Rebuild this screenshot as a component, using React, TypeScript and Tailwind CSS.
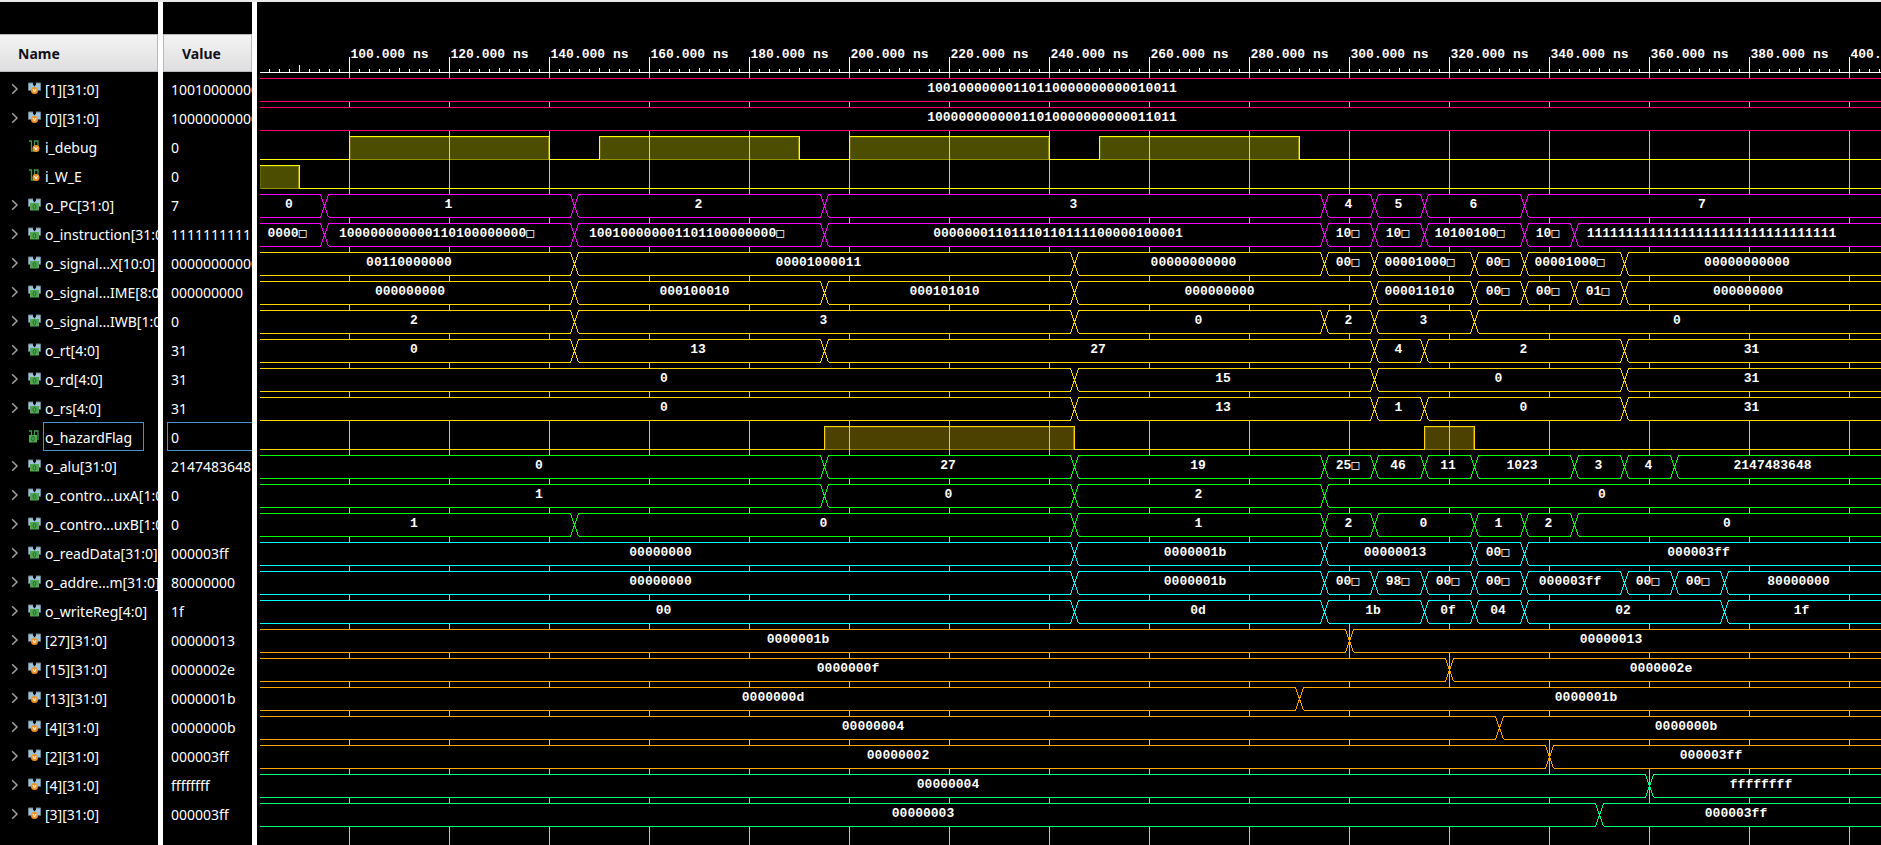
import { useLayoutEffect, useRef, useState } from "react";

type IconKind = "bus-var" | "bus-out" | "bit-var" | "bit-out";
type Segment = [start: number, text: string];

interface Signal {
  name: string;
  value: string;
  icon: IconKind;
  color: string;
  bus?: Segment[];
  pulses?: [from: number, to: number][];
  selected?: boolean;
}

const PINK = "#ff0072";
const YELLOW = "#ffff00";
const MAGENTA = "#ff00ff";
const GOLD = "#ffd700";
const GREEN = "#00ff00";
const CYAN = "#00ffff";
const ORANGE = "#ffa500";
const SPRING = "#00ff7f";

const BEGIN = 80;

/* A "□" at the end of a label marks a value that does not fit its segment. */
const SIGNALS: Signal[] = [
  { name: "[1][31:0]", value: "10010000000110110000000000010011", icon: "bus-var", color: PINK, bus: [[BEGIN, "10010000000110110000000000010011"]] },
  { name: "[0][31:0]", value: "10000000000011010000000000011011", icon: "bus-var", color: PINK, bus: [[BEGIN, "10000000000011010000000000011011"]] },
  { name: "i_debug", value: "0", icon: "bit-var", color: YELLOW, pulses: [[100, 140], [150, 190], [200, 240], [250, 290]] },
  { name: "i_W_E", value: "0", icon: "bit-var", color: YELLOW, pulses: [[BEGIN, 90]] },
  { name: "o_PC[31:0]", value: "7", icon: "bus-out", color: MAGENTA, bus: [[BEGIN, "0"], [95, "1"], [145, "2"], [195, "3"], [295, "4"], [305, "5"], [315, "6"], [335, "7"]] },
  { name: "o_instruction[31:0]", value: "11111111111111111111111111111111", icon: "bus-out", color: MAGENTA, bus: [[BEGIN, "0000□"], [95, "100000000000110100000000□"], [145, "100100000001101100000000□"], [195, "00000001101110110111100000100001"], [295, "10□"], [305, "10□"], [315, "10100100□"], [335, "10□"], [345, "11111111111111111111111111111111"]] },
  { name: "o_signal...X[10:0]", value: "00000000000", icon: "bus-out", color: GOLD, bus: [[BEGIN, "00110000000"], [145, "00001000011"], [245, "00000000000"], [295, "00□"], [305, "00001000□"], [325, "00□"], [335, "00001000□"], [355, "00000000000"]] },
  { name: "o_signal...IME[8:0]", value: "000000000", icon: "bus-out", color: GOLD, bus: [[BEGIN, "000000000"], [145, "000100010"], [195, "000101010"], [245, "000000000"], [305, "000011010"], [325, "00□"], [335, "00□"], [345, "01□"], [355, "000000000"]] },
  { name: "o_signal...IWB[1:0]", value: "0", icon: "bus-out", color: GOLD, bus: [[BEGIN, "2"], [145, "3"], [245, "0"], [295, "2"], [305, "3"], [325, "0"]] },
  { name: "o_rt[4:0]", value: "31", icon: "bus-out", color: GOLD, bus: [[BEGIN, "0"], [145, "13"], [195, "27"], [305, "4"], [315, "2"], [355, "31"]] },
  { name: "o_rd[4:0]", value: "31", icon: "bus-out", color: GOLD, bus: [[BEGIN, "0"], [245, "15"], [305, "0"], [355, "31"]] },
  { name: "o_rs[4:0]", value: "31", icon: "bus-out", color: GOLD, bus: [[BEGIN, "0"], [245, "13"], [305, "1"], [315, "0"], [355, "31"]] },
  { name: "o_hazardFlag", value: "0", icon: "bit-out", color: GOLD, pulses: [[195, 245], [315, 325]], selected: true },
  { name: "o_alu[31:0]", value: "2147483648", icon: "bus-out", color: GREEN, bus: [[BEGIN, "0"], [195, "27"], [245, "19"], [295, "25□"], [305, "46"], [315, "11"], [325, "1023"], [345, "3"], [355, "4"], [365, "2147483648"]] },
  { name: "o_contro...uxA[1:0]", value: "0", icon: "bus-out", color: GREEN, bus: [[BEGIN, "1"], [195, "0"], [245, "2"], [295, "0"]] },
  { name: "o_contro...uxB[1:0]", value: "0", icon: "bus-out", color: GREEN, bus: [[BEGIN, "1"], [145, "0"], [245, "1"], [295, "2"], [305, "0"], [325, "1"], [335, "2"], [345, "0"]] },
  { name: "o_readData[31:0]", value: "000003ff", icon: "bus-out", color: CYAN, bus: [[BEGIN, "00000000"], [245, "0000001b"], [295, "00000013"], [325, "00□"], [335, "000003ff"]] },
  { name: "o_addre...m[31:0]", value: "80000000", icon: "bus-out", color: CYAN, bus: [[BEGIN, "00000000"], [245, "0000001b"], [295, "00□"], [305, "98□"], [315, "00□"], [325, "00□"], [335, "000003ff"], [355, "00□"], [365, "00□"], [375, "80000000"]] },
  { name: "o_writeReg[4:0]", value: "1f", icon: "bus-out", color: CYAN, bus: [[BEGIN, "00"], [245, "0d"], [295, "1b"], [315, "0f"], [325, "04"], [335, "02"], [375, "1f"]] },
  { name: "[27][31:0]", value: "00000013", icon: "bus-var", color: ORANGE, bus: [[BEGIN, "0000001b"], [300, "00000013"]] },
  { name: "[15][31:0]", value: "0000002e", icon: "bus-var", color: ORANGE, bus: [[BEGIN, "0000000f"], [320, "0000002e"]] },
  { name: "[13][31:0]", value: "0000001b", icon: "bus-var", color: ORANGE, bus: [[BEGIN, "0000000d"], [290, "0000001b"]] },
  { name: "[4][31:0]", value: "0000000b", icon: "bus-var", color: ORANGE, bus: [[BEGIN, "00000004"], [330, "0000000b"]] },
  { name: "[2][31:0]", value: "000003ff", icon: "bus-var", color: ORANGE, bus: [[BEGIN, "00000002"], [340, "000003ff"]] },
  { name: "[4][31:0]", value: "ffffffff", icon: "bus-var", color: SPRING, bus: [[BEGIN, "00000004"], [360, "ffffffff"]] },
  { name: "[3][31:0]", value: "000003ff", icon: "bus-var", color: SPRING, bus: [[BEGIN, "00000003"], [350, "000003ff"]] },
];

/* Geometry of the wave canvas, in canvas pixels. */
const PX_PER_NS = 5;
const EDGE = 2;
const AXIS_Y = 70;
const FIRST_ROW = 76;
const PITCH = 29;
const WAVE_H = 23;
const SLOPE = 4;

const timeToX = (t: number) => (t <= BEGIN ? EDGE : 92 + (t - 100) * PX_PER_NS);

function SignalIcon({ kind }: { kind: IconKind }) {
  const bus = kind.startsWith("bus");
  const out = kind.endsWith("out");
  return (
    <svg width="14" height="13" viewBox="0 0 14 13" className="block shrink-0" aria-hidden="true">
      {bus ? (
        <>
          <path d="M.5 1H5v1.500l1.500 2L8 2.500V1h4.500v7.500H.5z" fill="#9cc3d8" />
          <path d="M.5 8.500V1H5M12.500 8.500V1H8" fill="none" stroke="#6d8490" strokeWidth="1" />
        </>
      ) : (
        <path d="M1 1h2.500v10h3M6.500 10V1H10v9" fill="none" stroke="#3f9a4a" strokeWidth="1.300" />
      )}
      {out ? (
        <>
          <rect x={bus ? 2 : 1} y="5" width={bus ? 9 : 8} height="7.500" fill="#4fa650" />
          <ellipse cx={bus ? 6.5 : 5} cy="8.700" rx="1.400" ry="2.300" fill="none" stroke="#1f6a2a" strokeWidth="1" />
        </>
      ) : (
        <>
          <circle cx={bus ? 6.5 : 8} cy="8.500" r="3.500" fill="#f0932b" />
          <path d={bus ? "M5 7l1.500 3L8 7" : "M6.500 7L8 10l1.500-3"} fill="none" stroke="#fff" strokeWidth="1" />
        </>
      )}
    </svg>
  );
}

function Chevron() {
  return (
    <svg width="8" height="12" viewBox="0 0 8 12" className="block" aria-hidden="true">
      <path d="M1.200 1.200L6 6l-4.800 4.800" fill="none" stroke="#a0a0a0" strokeWidth="1.500" />
    </svg>
  );
}

function BusWave({ signal, top, width }: { signal: Signal; top: number; width: number }) {
  const bottom = top + WAVE_H;
  const mid = top + WAVE_H / 2;
  const segs = (signal.bus ?? []).map(([start, text], i, all) => {
    const first = i === 0;
    const last = i === all.length - 1;
    const x0 = timeToX(start);
    const x1 = last ? width : timeToX(all[i + 1][0]);
    return {
      text,
      last,
      x0,
      x1,
      l: first ? x0 : x0 + SLOPE,
      r: last ? x1 : x1 - SLOPE,
      center: ((first ? -2 : x0) + x1 - 1 - text.length) / 2,
    };
  });
  return (
    <g>
      {segs.map((s) => (
        <polygon
          key={s.x0}
          points={`${s.x0},${mid} ${s.l},${top} ${s.r},${top} ${s.x1},${mid} ${s.r},${bottom} ${s.l},${bottom}`}
          fill="#000"
        />
      ))}
      {segs.map((s) => (
        <path
          key={s.x0}
          d={
            `M${s.l} ${top}H${s.r}M${s.l} ${bottom}H${s.r}` +
            (s.last ? "" : `M${s.r} ${top}L${s.x1 + SLOPE} ${bottom}M${s.r} ${bottom}L${s.x1 + SLOPE} ${top}`)
          }
          stroke={signal.color}
          fill="none"
        />
      ))}
      {segs.map((s) => (
        <text key={s.x0} x={s.center} y={top + 13} textAnchor="middle" fill="#fff">
          {s.text.replace("□", "")}
          {s.text.endsWith("□") && <tspan className="font-['DejaVu_Sans_Mono',monospace] font-normal">□</tspan>}
        </text>
      ))}
    </g>
  );
}

function BitWave({ signal, top, width }: { signal: Signal; top: number; width: number }) {
  const pulses = signal.pulses ?? [];
  const bottom = top + WAVE_H;
  let d = "";
  let x = EDGE;
  pulses.forEach(([from, to]) => {
    const a = timeToX(from);
    const b = timeToX(to);
    d += from <= BEGIN ? `M${a} ${top}H${b}V${bottom}` : `M${x} ${bottom}H${a}V${top}H${b}V${bottom}`;
    x = b;
  });
  d += `M${x} ${bottom}H${width}`;
  return (
    <g>
      {pulses.map(([from, to]) => (
        <rect
          key={from}
          x={timeToX(from) + 1}
          y={top + 1}
          width={timeToX(to) - timeToX(from) - 2}
          height={WAVE_H - 1}
          fill={signal.color}
          fillOpacity={0.3}
          stroke={signal.color}
          strokeOpacity={0.4}
        />
      ))}
      <path d={d} fill="none" stroke={signal.color} />
    </g>
  );
}

function WaveCanvas() {
  const ref = useRef<HTMLDivElement>(null);
  const [size, setSize] = useState({ w: 1624, h: 843 });

  useLayoutEffect(() => {
    const el = ref.current;
    if (!el) return;
    const update = () => setSize({ w: el.clientWidth, h: el.clientHeight });
    update();
    const observer = new ResizeObserver(update);
    observer.observe(el);
    return () => observer.disconnect();
  }, []);

  const ticks: number[] = [];
  for (let t = 84; timeToX(t) < size.w; t += 2) ticks.push(t);
  const majors = ticks.filter((t) => t % 20 === 0);

  return (
    <div ref={ref} className="min-w-0 flex-1 overflow-hidden bg-black">
      <svg
        width={size.w}
        height={size.h}
        viewBox={`-0.5 -0.5 ${size.w} ${size.h}`}
        shapeRendering="crispEdges"
        className="block font-['Liberation_Mono',monospace] text-[13px] font-bold"
        role="img"
        aria-label="Waveform"
      >
        {majors.map((t) => (
          <line key={t} x1={timeToX(t)} x2={timeToX(t)} y1={AXIS_Y} y2={size.h} stroke="#c0c0c0" />
        ))}
        <line x1={EDGE} x2={size.w} y1={AXIS_Y} y2={AXIS_Y} stroke="#fff" />
        {ticks.map((t) => {
          const rise = t % 20 === 0 ? 16 : t === 90 ? 8 : t % 10 === 0 ? 5 : 4;
          return <line key={t} x1={timeToX(t)} x2={timeToX(t)} y1={AXIS_Y - rise} y2={AXIS_Y} stroke="#fff" />;
        })}
        {majors.map((t) => (
          <text key={t} x={timeToX(t) + 1} y={55} fill="#fff">
            {`${t}.000 ns`}
          </text>
        ))}
        {SIGNALS.map((s, i) => {
          const top = FIRST_ROW + i * PITCH;
          return s.bus ? (
            <BusWave key={i} signal={s} top={top} width={size.w} />
          ) : (
            <BitWave key={i} signal={s} top={top} width={size.w} />
          );
        })}
      </svg>
    </div>
  );
}

const HEAD =
  "flex h-[38px] items-center border border-[#b9b9bb] bg-linear-to-b from-[#f4f4f4] to-[#dedee0] pt-0.5 text-sm font-bold text-[#101018]";

export default function App() {
  return (
    <div className="flex h-screen flex-col overflow-hidden border-t-2 border-[#e8e8e8] bg-black font-['Noto_Sans','Open_Sans',sans-serif] text-sm text-white">
      <main className="flex min-h-0 flex-1">
        <section className="w-[158px] shrink-0 overflow-hidden pt-8" aria-label="Signal names">
          <h2 className={`${HEAD} border-l-0 pl-[18px]`}>Name</h2>
          <ul className="pt-0.5">
            {SIGNALS.map((s, i) => (
              <li key={i} className="flex h-[29px] items-center whitespace-nowrap">
                <span className="flex w-7 shrink-0 justify-start pl-[11px]">
                  {s.bus && (
                    <button type="button" aria-label={`Expand ${s.name}`}>
                      <Chevron />
                    </button>
                  )}
                </span>
                <SignalIcon kind={s.icon} />
                <span
                  className={
                    s.selected
                      ? "ml-px flex h-[29px] w-[101px] items-center border border-[#4a90d0] pt-0.5 pl-px"
                      : "ml-px flex h-[29px] items-center pt-0.5 pl-0.5"
                  }
                >
                  {s.name}
                </span>
              </li>
            ))}
          </ul>
        </section>
        <div className="w-[5px] shrink-0 bg-white" />
        <section className="w-[89px] shrink-0 overflow-hidden pt-8" aria-label="Signal values">
          <h2 className={`${HEAD} pl-[18px]`}>Value</h2>
          <ul className="pt-0.5">
            {SIGNALS.map((s, i) => (
              <li
                key={i}
                className={
                  s.selected
                    ? "ml-1 flex h-[29px] items-center border border-r-0 border-[#4a90d0] pt-0.5 pl-[3px]"
                    : "ml-1 flex h-[29px] items-center pt-0.5 pl-1"
                }
              >
                {s.value}
              </li>
            ))}
          </ul>
        </section>
        <div className="w-[5px] shrink-0 bg-white" />
        <WaveCanvas />
      </main>
    </div>
  );
}
